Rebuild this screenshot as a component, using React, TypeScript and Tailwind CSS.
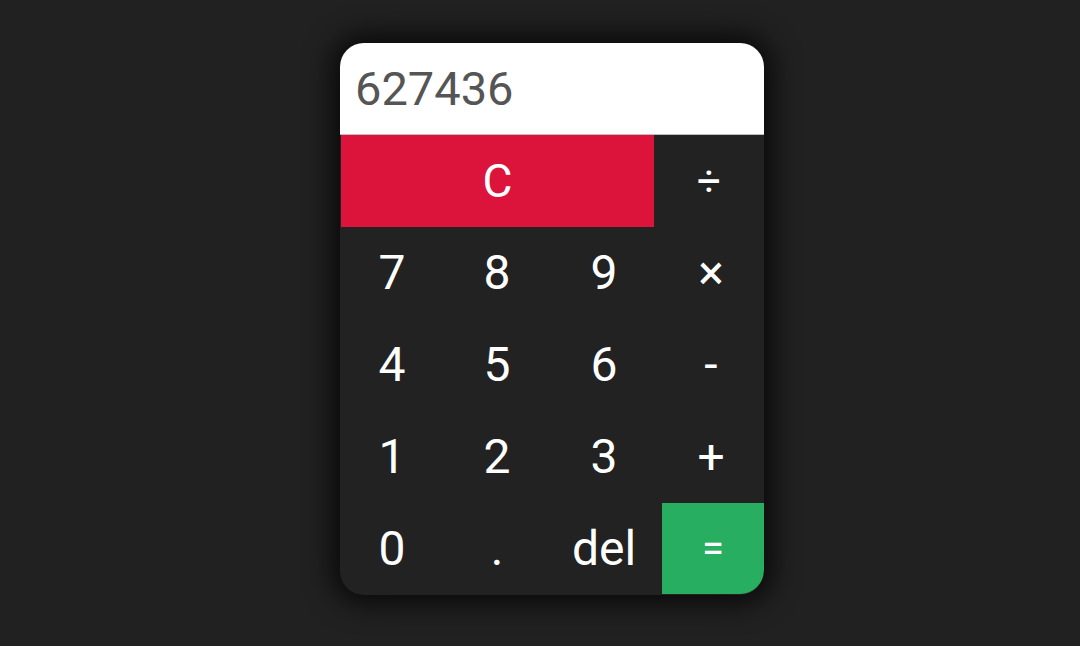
import React from 'react'

const rows = [
  ['7', '8', '9', '×'],
  ['4', '5', '6', '-'],
  ['1', '2', '3', '+'],
]

// columns in the reference aren't quite even
const colWidths = ['w-[104px]', 'w-[106px]', 'w-[108px]', 'flex-1']

function Key({ label, className = '' }: { label: string; className?: string }) {
  return (
    <button className={`flex h-[92px] items-center justify-center text-[48px] text-white ${className}`}>
      {label}
    </button>
  )
}

export default function App() {
  return (
    <div className="min-h-[646px] w-full bg-[#212121] pt-[43px]" style={{ fontFamily: 'Roboto, "Noto Sans", sans-serif' }}>
      <div className="ml-[340px] w-[424px] overflow-hidden rounded-[24px] bg-[#222222] shadow-[0_0_28px_8px_rgba(0,0,0,0.75)]">
        {/* Display */}
        <div className="flex h-[92px] items-center border-b border-[#bdbdbd] bg-white pl-[15px] pt-[2px] text-[47px] text-[#555555]">
          627436
        </div>

        {/* Keys */}
        <div className="flex">
          <button className="ml-px flex h-[92px] w-[313px] items-center justify-center bg-[#dc143c] text-[46px] text-white">
            C
          </button>
          <button className="flex h-[92px] flex-1 items-center justify-center text-[42px] text-white">÷</button>
        </div>
        {rows.map((row, i) => (
          <div key={i} className="flex">
            {row.map((k, j) => (
              <Key key={k} label={k} className={colWidths[j]} />
            ))}
          </div>
        ))}
        <div className="flex">
          <Key label="0" className={colWidths[0]} />
          <Key label="." className={colWidths[1]} />
          <Key label="del" className={colWidths[2]} />
          <button className="ml-[4px] flex h-[91px] flex-1 items-center justify-center rounded-br-[24px] bg-[#27ae60] text-[40px] text-white">
            =
          </button>
        </div>
      </div>
    </div>
  )
}
